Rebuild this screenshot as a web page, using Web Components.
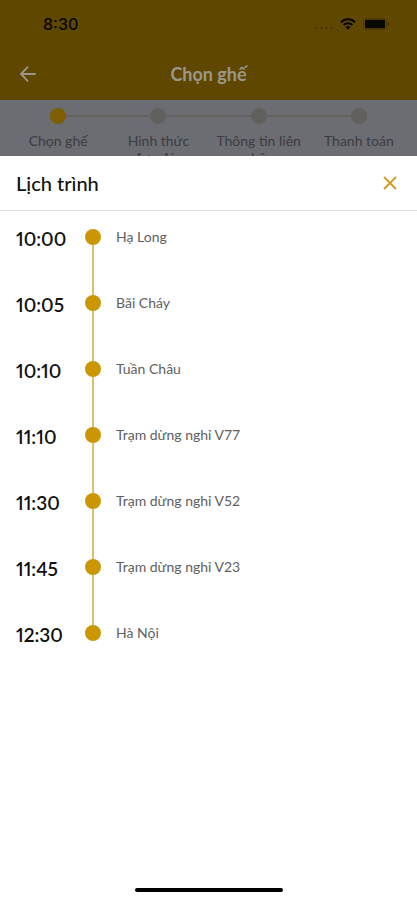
<!DOCTYPE html>
<html lang="vi">
<head>
<meta charset="utf-8">
<meta name="viewport" content="width=device-width, initial-scale=1">
<title>Lịch trình</title>
<style>
    body {
        margin: 0;
        background-color: #fff;
        font-family: Lato, "Noto Sans", sans-serif;
        --gold: #ca9703;
        --header-bg: #5f4700;
        --dimmed-bg: #6c6d72;
    }
</style>
</head>
<body>
<booking-page>
    <status-bar slot="top" time="8:30"></status-bar>
    <nav-bar slot="top">Chọn ghế</nav-bar>
    <step-list slot="top">
        <step-item active>Chọn ghế</step-item>
        <step-item>Hình thức đưa đón</step-item>
        <step-item>Thông tin liên hệ</step-item>
        <step-item>Thanh toán</step-item>
    </step-list>
    <bottom-sheet heading="Lịch trình">
        <time-line>
            <time-stop time="10:00">Hạ Long</time-stop>
            <time-stop time="10:05">Bãi Cháy</time-stop>
            <time-stop time="10:10">Tuần Châu</time-stop>
            <time-stop time="11:10">Trạm dừng nghỉ V77</time-stop>
            <time-stop time="11:30">Trạm dừng nghỉ V52</time-stop>
            <time-stop time="11:45">Trạm dừng nghỉ V23</time-stop>
            <time-stop time="12:30">Hà Nội</time-stop>
        </time-line>
    </bottom-sheet>
</booking-page>
<script>
class BaseComponent extends HTMLElement {
    constructor() {
        super()
        this.attachShadow({ mode: 'open' })
    }

    connectedCallback() {
        const template = document.createElement('template')
        template.innerHTML = this.html()
        this.shadowRoot.innerHTML = ''
        this.shadowRoot.appendChild(template.content)
    }
}

class BookingPage extends BaseComponent {
    html() {
        return `
            <style>
                :host {
                    display: flex;
                    flex-direction: column;
                    min-height: 100vh;
                }
                /* the screen behind only peeks out above the sheet */
                .behind {
                    flex: none;
                    height: 156px;
                    overflow: hidden;
                    background-color: var(--dimmed-bg);
                }
            </style>
            <div class="behind"><slot name="top"></slot></div>
            <slot></slot>
        `
    }
}

class StatusBar extends BaseComponent {
    html() {
        return `
            <style>
                :host {
                    display: flex;
                    align-items: center;
                    justify-content: space-between;
                    height: 48px;
                    padding: 0 26px 0 43px;
                    background-color: var(--header-bg);
                    color: #080600;
                }
                time {
                    font: 500 16px Inter, sans-serif;
                }
                .icons {
                    display: flex;
                    align-items: center;
                    gap: 7px;
                }
                svg {
                    display: block;
                }
            </style>
            <time>${this.getAttribute('time')}</time>
            <div class="icons">
                <svg width="18" height="12" viewBox="0 0 18 12" fill="#3a2c00">
                    <circle cx="1.5" cy="10.2" r=".9"/><circle cx="6.5" cy="10.2" r=".9"/>
                    <circle cx="11.5" cy="10.2" r=".9"/><circle cx="16.5" cy="10.2" r=".9"/>
                </svg>
                <svg width="16" height="12" viewBox="0 0 16 12" fill="none" stroke="currentColor" stroke-width="2">
                    <path d="M1 4.2a10 10 0 0 1 14 0"/>
                    <path d="M3.6 7a6.2 6.2 0 0 1 8.8 0"/>
                    <path d="M8 11.8 5.6 9.3a3.4 3.4 0 0 1 4.8 0z" fill="currentColor" stroke="none"/>
                </svg>
                <svg width="28" height="12" viewBox="0 0 28 12">
                    <rect x=".5" y=".5" width="23" height="11" rx="3" fill="none" stroke="#503c00"/>
                    <rect x="2" y="1.8" width="20" height="8.4" rx="1" fill="currentColor"/>
                    <path d="M25 4v4c1.6-.6 1.6-3.4 0-4z" fill="#463500"/>
                </svg>
            </div>
        `
    }
}

class NavBar extends BaseComponent {
    html() {
        return `
            <style>
                :host {
                    display: grid;
                    grid-template-columns: 40px 1fr 40px;
                    align-items: center;
                    height: 52px;
                    padding: 0 8px;
                    background-color: var(--header-bg);
                    color: #9b978c;
                }
                button {
                    display: flex;
                    justify-content: center;
                    padding: 0;
                    border: 0;
                    background: none;
                    color: inherit;
                }
                h1 {
                    margin: 0;
                    font-size: 18px;
                    line-height: 24px;
                    font-weight: 700;
                    text-align: center;
                }
            </style>
            <button type="button" aria-label="Quay lại">
                <svg width="16" height="16" viewBox="0 0 16 16" fill="none" stroke="currentColor" stroke-width="1.8" stroke-linecap="round" stroke-linejoin="round">
                    <path d="M15 8H1M7.6 1.2 1 8l6.6 6.8"/>
                </svg>
            </button>
            <h1><slot></slot></h1>
        `
    }
}

class StepList extends BaseComponent {
    html() {
        return `
            <style>
                :host {
                    display: grid;
                    grid-template-columns: repeat(4, 1fr);
                    padding: 8px 8px 0;
                }
            </style>
            <slot></slot>
        `
    }
}

class StepItem extends BaseComponent {
    html() {
        return `
            <style>
                :host {
                    display: block;
                    text-align: center;
                    color: #3c3c40;
                }
                .track {
                    display: grid;
                    grid-template-columns: 1fr 16px 1fr;
                    align-items: center;
                }
                .line {
                    height: 2px;
                    background-color: #636260;
                }
                :host(:first-child) .before,
                :host(:last-child) .after {
                    visibility: hidden;
                }
                .dot {
                    height: 16px;
                    border-radius: 50%;
                    background-color: #61605e;
                }
                :host([active]) .dot {
                    background-color: #7d5e00;
                }
                .label {
                    padding: 8px 6px 0;
                    font-size: 14px;
                    line-height: 17px;
                }
            </style>
            <div class="track">
                <span class="line before"></span>
                <span class="dot"></span>
                <span class="line after"></span>
            </div>
            <div class="label"><slot></slot></div>
        `
    }
}

class BottomSheet extends BaseComponent {
    html() {
        return `
            <style>
                :host {
                    display: flex;
                    flex: 1;
                    flex-direction: column;
                    background-color: #fff;
                }
                header {
                    display: flex;
                    align-items: center;
                    justify-content: space-between;
                    height: 54px;
                    padding: 0 20px 0 16px;
                    border-bottom: 1px solid #dedede;
                }
                h2 {
                    margin: 0;
                    font-size: 20px;
                    line-height: 24px;
                    font-weight: 500;
                    color: #111;
                }
                button {
                    display: flex;
                    padding: 0;
                    border: 0;
                    background: none;
                    color: #d09a1c;
                }
                main {
                    flex: 1;
                }
                .home {
                    width: 148px;
                    height: 4px;
                    margin: 0 auto 8px;
                    border-radius: 2px;
                    background-color: #000;
                }
            </style>
            <header>
                <h2>${this.getAttribute('heading')}</h2>
                <button type="button" aria-label="Đóng">
                    <svg width="14" height="14" viewBox="0 0 14 14" fill="none" stroke="currentColor" stroke-width="1.8">
                        <path d="M1 1l12 12M13 1 1 13"/>
                    </svg>
                </button>
            </header>
            <main><slot></slot></main>
            <div class="home"></div>
        `
    }
}

class TimeLine extends BaseComponent {
    html() {
        return `
            <style>
                :host {
                    display: block;
                    padding: 18px 16px;
                }
            </style>
            <slot></slot>
        `
    }
}

class TimeStop extends BaseComponent {
    html() {
        return `
            <style>
                :host {
                    display: grid;
                    grid-template-columns: 69px 16px 1fr;
                    height: 66px;
                }
                time {
                    font-size: 19px;
                    line-height: 20px;
                    font-weight: 600;
                    font-variant-numeric: proportional-nums;
                    color: #111;
                }
                .marker {
                    display: flex;
                    flex-direction: column;
                    align-items: center;
                }
                .dot {
                    flex: none;
                    width: 16px;
                    height: 16px;
                    border-radius: 50%;
                    background-color: var(--gold);
                }
                .line {
                    flex: 1;
                    width: 2px;
                    background-color: #e0bf6a;
                }
                :host(:last-child) .line {
                    display: none;
                }
                .place {
                    padding-left: 15px;
                    font-size: 14px;
                    line-height: 16px;
                    color: #606060;
                }
            </style>
            <time>${this.getAttribute('time')}</time>
            <div class="marker">
                <span class="dot"></span>
                <span class="line"></span>
            </div>
            <div class="place"><slot></slot></div>
        `
    }
}

customElements.define('booking-page', BookingPage)
customElements.define('status-bar', StatusBar)
customElements.define('nav-bar', NavBar)
customElements.define('step-list', StepList)
customElements.define('step-item', StepItem)
customElements.define('bottom-sheet', BottomSheet)
customElements.define('time-line', TimeLine)
customElements.define('time-stop', TimeStop)
</script>
</body>
</html>
